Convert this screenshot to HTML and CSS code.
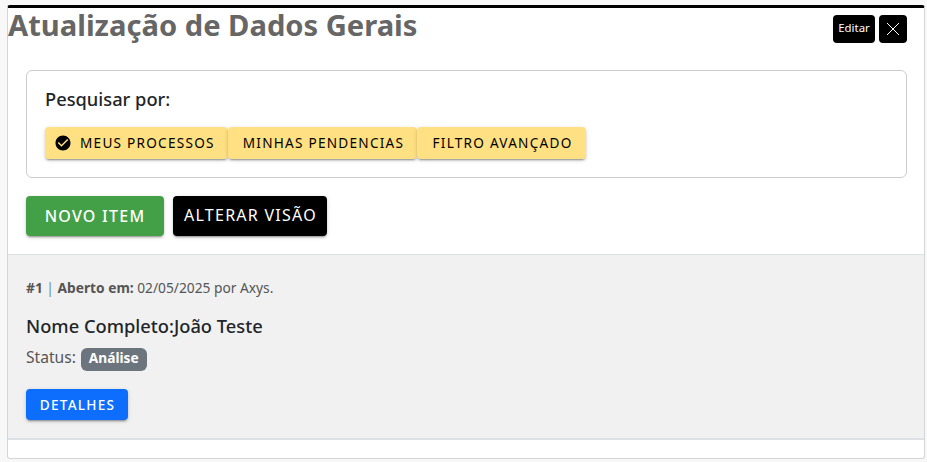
FILE: index.html
```html
<!DOCTYPE html>
<html lang="pt-BR">
<head>
  <meta charset="UTF-8">
  <meta name="viewport" content="width=device-width, initial-scale=1.0">
  <title>Atualização de Dados Gerais</title>
  <link rel="stylesheet" href="styles.css">
</head>
<body>
  <div class="card">
    <!-- Title and window buttons -->
    <div class="card-header">
      <h1>Atualização de Dados Gerais</h1>
      <div class="header-actions">
        <button class="btn-small">Editar</button>
        <button class="btn-small btn-close" aria-label="Fechar">
          <svg width="14" height="14" viewBox="0 0 14 14" fill="none" stroke="#fff" stroke-width="1">
            <path d="M1 1l12 12M13 1L1 13"/>
          </svg>
        </button>
      </div>
    </div>

    <!-- Search filters -->
    <div class="search-box">
      <h2>Pesquisar por:</h2>
      <div class="filters">
        <button class="btn btn-filter active">
          <svg width="18" height="18" viewBox="0 0 24 24">
            <path d="M12 2C6.48 2 2 6.48 2 12s4.480 10 10 10 10-4.480 10-10S17.520 2 12 2zm-2 15l-5-5 1.410-1.410L10 14.170l7.590-7.590L19 8l-9 9z"/>
          </svg>
          MEUS PROCESSOS
        </button>
        <button class="btn btn-filter pending">MINHAS PENDENCIAS</button>
        <button class="btn btn-filter advanced">FILTRO AVANÇADO</button>
      </div>
    </div>

    <div class="actions">
      <button class="btn btn-new">NOVO ITEM</button>
      <button class="btn btn-view">ALTERAR VISÃO</button>
    </div>

    <!-- Process item -->
    <div class="item">
      <p class="item-info"><strong>#1</strong> <span class="divider">|</span> <strong>Aberto em:</strong> 02/05/2025 por Axys.</p>
      <h2>Nome Completo:João Teste</h2>
      <p class="status">Status: <span class="badge">Análise</span></p>
      <button class="btn btn-details">DETALHES</button>
    </div>
  </div>
</body>
</html>
```

FILE: styles.css
```css
* {
  box-sizing: border-box;
}

body, h1, h2, p, button {
  margin: 0;
  padding: 0;
}

body {
  font-family: "Noto Sans", sans-serif;
  background-color: #f8f8f8;
  padding: 5px 2px 3px 7px;
  color: #212529;
}

.card {
  height: 454px;
  background-color: #fff;
  border: 1px solid #d5d5d5;
  border-top: 3px solid #000;
  border-radius: 3px;
}

/* Header */
.card-header {
  display: flex;
  justify-content: space-between;
  height: 62px;
  padding-right: 17px;
}

h1 {
  font-size: 29.15px;
  line-height: 35px;
  font-weight: 700;
  color: #666;
}

.header-actions {
  display: flex;
  gap: 4px;
  padding-top: 7px;
}

button {
  font-family: inherit;
  border: none;
  cursor: pointer;
}

.btn-small {
  width: 42px;
  height: 28px;
  padding-bottom: 3px;
  font-size: 11.4px;
  color: #fff;
  background-color: #000;
  border-radius: 4px;
}

.btn-close {
  width: 28px;
  padding: 0 1px 0 0;
  display: flex;
  align-items: center;
  justify-content: center;
}

/* Search box */
.search-box {
  height: 108px;
  margin: 0 17px 0 18px;
  padding: 16px 18px;
  border: 1px solid #ccc;
  border-radius: 6px;
}

h2 {
  font-size: 18.3px;
  line-height: 24px;
  font-weight: 500;
}

.filters {
  display: flex;
  margin-top: 16px;
}

.btn {
  display: flex;
  align-items: center;
  justify-content: center;
  letter-spacing: 1.25px;
  font-weight: 500;
  color: #fff;
  border-radius: 4px;
  box-shadow: 0 3px 1px -2px rgba(0, 0, 0, 0.2), 0 2px 2px 0 rgba(0, 0, 0, 0.14), 0 1px 5px 0 rgba(0, 0, 0, 0.12);
}

.btn-filter {
  height: 32px;
  padding: 0 0 1px 2px;
  font-size: 13.6px;
  font-weight: 400;
  color: #000;
  background-color: #ffe082;
}

.active {
  width: 183px;
  justify-content: flex-start;
  padding-left: 9px;
}

.active svg {
  margin-right: 8px;
}

.pending {
  width: 189px;
}

.advanced {
  width: 169px;
}

/* Main actions */
.actions {
  display: flex;
  gap: 9px;
  padding: 18px;
}

.btn-new {
  width: 138px;
  height: 40px;
  font-size: 16px;
  background-color: #43a047;
}

.btn-view {
  width: 154px;
  height: 40px;
  padding: 0 0 2px 1px;
  font-size: 16px;
  font-weight: 400;
  background-color: #000;
}

/* Process item */
.item {
  height: 186px;
  padding: 23px 18px 0;
  background-color: #f1f1f1;
  border-top: 1px solid #dee2e6;
  border-bottom: 2px solid #dee2e6;
}

.item-info {
  font-size: 13.75px;
  line-height: 20px;
  color: #555;
}

.divider {
  color: #6d8fa8;
}

.item h2 {
  margin-top: 16px;
}

.status {
  display: flex;
  align-items: flex-start;
  gap: 5px;
  margin-top: 8px;
  height: 25px;
  font-size: 15.6px;
  line-height: 23px;
  color: #555;
}

.badge {
  height: 23px;
  margin-top: 2px;
  padding: 0 8px;
  font-size: 13.7px;
  line-height: 20px;
  font-weight: 700;
  color: #fff;
  background-color: #6c757d;
  border-radius: 6px;
}

.btn-details {
  width: 102px;
  height: 31px;
  margin-top: 18px;
  padding: 0 0 1px 1px;
  font-size: 13.6px;
  background-color: #0d6efd;
}
```
